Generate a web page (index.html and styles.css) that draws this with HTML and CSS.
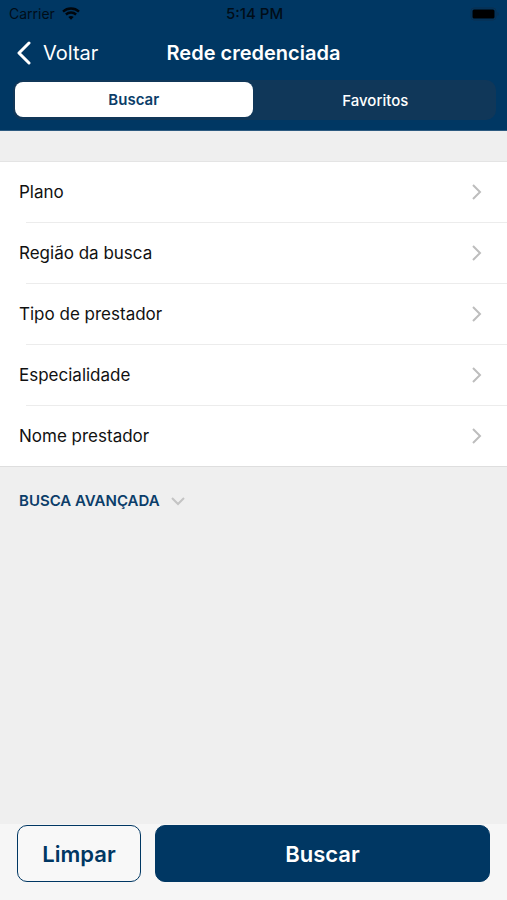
FILE: index.html
```html
<!DOCTYPE html>
<html lang="pt-BR">
<head>
<meta charset="utf-8">
<meta name="viewport" content="width=device-width, initial-scale=1">
<title>Rede credenciada</title>
<link rel="stylesheet" href="styles.css">
</head>
<body>
<header class="header">
  <div class="status">
    <span class="carrier">Carrier
      <svg class="wifi" viewBox="0 0 18 13" aria-hidden="true"><path d="M1 4.600C5.500.5 12.500.5 17 4.600"/><path d="M3.900 7.500c2.900-2.600 7.300-2.600 10.200 0"/><path class="dot" d="M6.300 10c1.500-1.400 3.900-1.400 5.400 0L9 12.700z"/></svg>
    </span>
    <span class="time">5:14 PM</span>
    <svg class="battery" viewBox="0 0 30 14" aria-hidden="true"><rect class="case" x="1" y="1" width="25" height="12" rx="3"/><rect x="2.500" y="2.500" width="22" height="9" rx="1.500"/><path class="cap" d="M27.500 5v4c1.500-.5 1.500-3.500 0-4z"/></svg>
  </div>
  <nav class="nav">
    <a class="back" href="#"><svg viewBox="0 0 16 24" aria-hidden="true"><path d="M13 2 3 12l10 10"/></svg>Voltar</a>
    <h1 class="title">Rede credenciada</h1>
  </nav>
  <div class="segments">
    <button class="segment selected" type="button" aria-pressed="true">Buscar</button>
    <button class="segment" type="button" aria-pressed="false">Favoritos</button>
  </div>
</header>
<main class="content">
  <ul class="list">
    <li><a class="row" href="#">Plano<svg viewBox="0 0 10 16" aria-hidden="true"><path d="m1 1 7 7-7 7"/></svg></a></li>
    <li><a class="row" href="#">Região da busca<svg viewBox="0 0 10 16" aria-hidden="true"><path d="m1 1 7 7-7 7"/></svg></a></li>
    <li><a class="row" href="#">Tipo de prestador<svg viewBox="0 0 10 16" aria-hidden="true"><path d="m1 1 7 7-7 7"/></svg></a></li>
    <li><a class="row" href="#">Especialidade<svg viewBox="0 0 10 16" aria-hidden="true"><path d="m1 1 7 7-7 7"/></svg></a></li>
    <li><a class="row" href="#">Nome prestador<svg viewBox="0 0 10 16" aria-hidden="true"><path d="m1 1 7 7-7 7"/></svg></a></li>
  </ul>
  <button class="advanced" type="button">BUSCA AVANÇADA<svg viewBox="0 0 16 10" aria-hidden="true"><path d="m2 2 6 6 6-6"/></svg></button>
</main>
<footer class="footer">
  <button class="action clear" type="button">Limpar</button>
  <button class="action search" type="button">Buscar</button>
</footer>
</body>
</html>
```
FILE: styles.css
```css
* { box-sizing: border-box; }

body {
  margin: 0;
  min-height: 100vh;
  display: flex;
  flex-direction: column;
  background: #efefef;
  color: #111;
  font-family: Inter, "Liberation Sans", sans-serif;
  font-size: 17px;
}

button {
  margin: 0;
  padding: 0;
  border: 0;
  font-family: inherit;
  cursor: pointer;
}

a { color: inherit; text-decoration: none; }

svg { flex: none; fill: none; }

.header {
  background: #003763;
  border-bottom: 1px solid #2d5a80;
  padding-bottom: 10px;
}

.status {
  display: grid;
  grid-template-columns: 1fr auto 1fr;
  align-items: center;
  height: 27px;
  padding: 0 7px 0 9px;
  color: #000d18;
  font-size: 14px;
}

.carrier { display: flex; align-items: center; gap: 7px; }
.wifi { width: 18px; height: 13px; stroke: #00060c; stroke-width: 2.4; }
.wifi .dot { fill: #00060c; stroke: none; }
.time { font-size: 15px; font-weight: 500; }
.battery { width: 30px; height: 14px; justify-self: end; fill: #000; }
.battery .case { fill: none; stroke: #0b2f4e; }
.battery .cap { fill: #0b2f4e; }

.nav {
  display: grid;
  grid-template-columns: 1fr auto 1fr;
  align-items: center;
  height: 51px;
  padding: 0 16px;
  color: #fff;
}

.back { display: flex; align-items: center; gap: 11px; font-size: 20px; }
.back svg { width: 16px; height: 24px; stroke: #fff; stroke-width: 3; stroke-linecap: round; stroke-linejoin: round; }
.title { margin: 0; font-size: 20px; font-weight: 600; }

.segments {
  display: flex;
  gap: 4px;
  margin: 2px 11px 0 13px;
  padding: 2px;
  height: 40px;
  border-radius: 10px;
  background: #103759;
}

.segment {
  flex: 1;
  border-radius: 8px;
  background: transparent;
  color: #fff;
  font-size: 15px;
  font-weight: 500;
}
.segment.selected { margin-bottom: 1px; background: #fff; color: #0b3d69; font-weight: 600; }

.content { flex: 1; padding-top: 30px; }

.list {
  margin: 0;
  padding: 0;
  list-style: none;
  background: #fff;
  border-top: 1px solid #e4e4e4;
  border-bottom: 1px solid #dedede;
}
.list li + li::before {
  content: "";
  display: block;
  height: 1px;
  margin-left: 26px;
  background: #ececec;
}

.row {
  display: flex;
  align-items: center;
  justify-content: space-between;
  height: 60px;
  padding: 0 25px 0 19px;
}
.row svg { width: 10px; height: 16px; stroke: #bdbdbd; stroke-width: 2; }

.advanced {
  display: flex;
  align-items: center;
  gap: 10px;
  padding: 24px 19px;
  background: transparent;
  color: #0b3d69;
  font-size: 15px;
  font-weight: 600;
}
.advanced svg { width: 16px; height: 10px; stroke: #c4c4c4; stroke-width: 2; }

.footer {
  display: flex;
  gap: 14px;
  padding: 1px 17px 18px;
  background: #f6f6f6;
}

.action {
  height: 57px;
  border: 1px solid #003763;
  border-radius: 10px;
  font-size: 22px;
  font-weight: 600;
}
.clear { flex: 123; background: #f8f8f8; color: #003763; }
.search { flex: 336; background: #003763; color: #fff; }
```
